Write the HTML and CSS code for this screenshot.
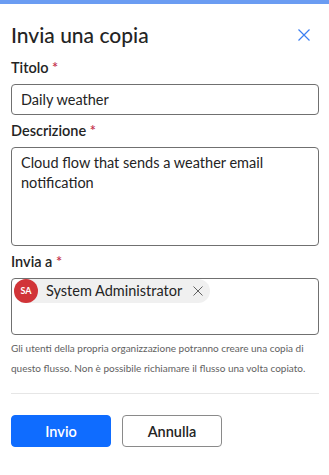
FILE: index.html
```html
<!DOCTYPE html>
<html lang="it">
<head>
    <meta charset="UTF-8">
    <meta name="viewport" content="width=device-width, initial-scale=1.0">
    <title>Invia una copia</title>
    <link rel="stylesheet" href="styles.css">
</head>
<body>
    <div class="topbar"></div>
    <div class="panel">
        <div class="panel-header">
            <h1>Invia una copia</h1>
            <button class="close-btn" aria-label="Chiudi">
                <svg width="12" height="12" viewBox="0 0 12 12">
                    <path d="M0.5 0.5 L11.5 11.5 M11.5 0.5 L0.5 11.5" stroke="#3b7ff2" stroke-width="1.2" fill="none"/>
                </svg>
            </button>
        </div>

        <label class="field-label">Titolo <span class="req">*</span></label>
        <div class="input">Daily weather</div>

        <label class="field-label">Descrizione <span class="req">*</span></label>
        <div class="input textarea">Cloud flow that sends a weather email notification</div>

        <label class="field-label">Invia a <span class="req">*</span></label>
        <div class="input picker">
            <span class="chip">
                <span class="avatar">SA</span>
                <span class="chip-name">System Administrator</span>
                <svg class="chip-x" width="10" height="10" viewBox="0 0 10 10">
                    <path d="M0.5 0.5 L9.5 9.5 M9.5 0.5 L0.5 9.5" stroke="#616161" stroke-width="1" fill="none"/>
                </svg>
            </span>
        </div>

        <p class="help">Gli utenti della propria organizzazione potranno creare una copia di questo flusso. Non è possibile richiamare il flusso una volta copiato.</p>

        <div class="divider"></div>

        <div class="actions">
            <button class="btn primary">Invio</button>
            <button class="btn">Annulla</button>
        </div>
    </div>
</body>
</html>
```

FILE: styles.css
```css
body {
    margin: 0;
    background: #fff;
    font-family: Lato, "Noto Sans", sans-serif;
    color: #242424;
}

.topbar {
    height: 4px;
    background: #6b9cf2;
}

.panel {
    padding: 0 10px 0 11px;
}

.panel-header {
    display: flex;
    justify-content: space-between;
    align-items: center;
    margin-top: 17px;
    height: 28px;
}

.panel-header h1 {
    margin: 0;
    font-size: 21px;
    font-weight: 500;
    line-height: 28px;
}

.close-btn {
    border: none;
    background: none;
    padding: 0;
    margin-right: 9px;
    width: 12px;
    height: 12px;
    display: flex;
}

.field-label {
    display: block;
    font-size: 14.5px;
    font-weight: 600;
    line-height: 20px;
    margin-top: 9px;
    margin-bottom: 6px;
}

.field-label .req {
    color: #c4314b;
}

.input + .field-label {
    margin-top: 6px;
}

.input {
    box-sizing: border-box;
    border: 1px solid #707070;
    border-radius: 4px;
    height: 31px;
    padding: 5px 9px;
    font-size: 14.5px;
    line-height: 20px;
}

.textarea {
    height: 99px;
}

.picker {
    height: 57px;
    padding: 0 2px;
}

.chip {
    display: inline-flex;
    align-items: center;
    height: 24px;
    background: #f0f0f0;
    border-radius: 12px;
    padding-right: 7px;
}

.avatar {
    width: 24px;
    height: 24px;
    border-radius: 50%;
    background: #d13438;
    color: #fff;
    font-size: 9px;
    font-weight: 700;
    display: flex;
    align-items: center;
    justify-content: center;
}

.chip-name {
    margin: 0 11px 0 8px;
    font-size: 14.5px;
}

.help {
    margin: 3px 0 0;
    font-size: 10px;
    line-height: 20px;
    color: #616161;
}

.divider {
    margin-top: 15px;
    border-top: 1px solid #e6e6e6;
}

.actions {
    display: flex;
    gap: 11px;
    margin-top: 21px;
}

.btn {
    width: 100px;
    height: 32px;
    border: 1px solid #8a8a8a;
    border-radius: 4px;
    background: #fff;
    color: #242424;
    font-family: inherit;
    font-size: 14.5px;
    font-weight: 600;
}

.btn.primary {
    background: #0f6cff;
    border-color: #0f6cff;
    color: #fff;
}
```
